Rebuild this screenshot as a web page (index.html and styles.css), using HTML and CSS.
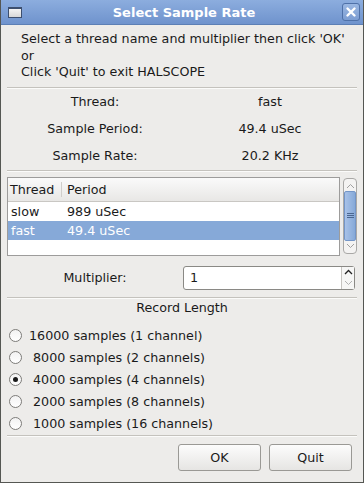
FILE: index.html
```html
<!DOCTYPE html>
<html lang="en">
<head>
    <meta charset="UTF-8">
    <title>Select Sample Rate</title>
    <link rel="stylesheet" href="styles.css">
</head>
<body>
    <div class="window">
        <div class="titlebar">
            <span class="win-icon"></span>
            <span class="title">Select Sample Rate</span>
            <span class="close-btn">
                <svg width="12" height="12" viewBox="0 0 12 12"><path d="M2.5 2.5 L9.5 9.5 M9.5 2.5 L2.5 9.5" stroke="#fff" stroke-width="2.4" stroke-linecap="round"/></svg>
            </span>
        </div>

        <div class="body">
            <div class="intro">
                <p>Select a thread name and multiplier then click 'OK'</p>
                <p>or</p>
                <p>Click 'Quit' to exit HALSCOPE</p>
            </div>
            <hr class="sep">

            <div class="info">
                <span>Thread:</span><span>fast</span>
                <span>Sample Period:</span><span>49.4 uSec</span>
                <span>Sample Rate:</span><span>20.2 KHz</span>
            </div>
            <hr class="sep">

            <div class="list-row">
                <div class="listbox">
                    <div class="lb-head">
                        <span class="col-thread">Thread</span>
                        <span class="col-period">Period</span>
                    </div>
                    <div class="lb-item">
                        <span class="col-thread">slow</span>
                        <span class="col-period">989 uSec</span>
                    </div>
                    <div class="lb-item selected">
                        <span class="col-thread">fast</span>
                        <span class="col-period">49.4 uSec</span>
                    </div>
                </div>
                <div class="vscroll">
                    <svg class="arrow" width="9" height="6" viewBox="0 0 9 6"><path d="M1 5 L4.5 1.5 L8 5" fill="none" stroke="#a0a0a0" stroke-width="1"/></svg>
                    <div class="thumb">
                        <svg width="7" height="7" viewBox="0 0 7 7"><path d="M0 1.5 H7 M0 3.5 H7 M0 5.5 H7" stroke="#4a6690" stroke-width="1"/></svg>
                    </div>
                    <svg class="arrow" width="9" height="6" viewBox="0 0 9 6"><path d="M1 1 L4.5 4.5 L8 1" fill="none" stroke="#a0a0a0" stroke-width="1"/></svg>
                </div>
            </div>

            <div class="mult-row">
                <span class="mult-label">Multiplier:</span>
                <div class="spinbox">
                    <span class="spin-value">1</span>
                    <div class="spin-btns">
                        <svg width="9" height="6" viewBox="0 0 9 6"><path d="M1 5 L4.5 1.5 L8 5" fill="none" stroke="#222" stroke-width="1.3"/></svg>
                        <svg width="9" height="6" viewBox="0 0 9 6"><path d="M1 1 L4.5 4.5 L8 1" fill="none" stroke="#b0b0b0" stroke-width="1"/></svg>
                    </div>
                </div>
            </div>
            <hr class="sep">

            <div class="record-title">Record Length</div>
            <div class="radios">
                <label class="radio"><span class="dot"></span>16000 samples (1 channel)</label>
                <label class="radio"><span class="dot"></span>&nbsp;8000 samples (2 channels)</label>
                <label class="radio"><span class="dot checked"></span>&nbsp;4000 samples (4 channels)</label>
                <label class="radio"><span class="dot"></span>&nbsp;2000 samples (8 channels)</label>
                <label class="radio"><span class="dot"></span>&nbsp;1000 samples (16 channels)</label>
            </div>
            <hr class="sep">

            <div class="buttons">
                <button class="btn">OK</button>
                <button class="btn">Quit</button>
            </div>
        </div>
    </div>
</body>
</html>
```

FILE: styles.css
```css
/* dialog look, GTK-ish */
body {
    margin: 0;
    font-family: "DejaVu Sans", sans-serif;
    font-size: 12.7px;
    color: #1a1a1a;
}

.window {
    width: 364px;
    height: 483px;
    box-sizing: border-box;
    background: #edecea;
    border: 1px solid #555753;
    border-top: none;
    display: flex;
    flex-direction: column;
    overflow: hidden;
}

.titlebar {
    height: 24px;
    flex: none;
    margin: 0 -1px;
    background: linear-gradient(#8cadde, #6f93cd);
    border-bottom: 1px solid #5c7fb5;
    display: flex;
    align-items: center;
    padding: 0 4px 0 8px;
}

.win-icon {
    width: 12px;
    height: 8px;
    border: 1px solid #3d4f6e;
    border-top-width: 2px;
    background: linear-gradient(#f4f4f4, #d8d8d8);
}

.title {
    flex: 1;
    text-align: center;
    color: #fff;
    font-weight: bold;
    font-size: 13px;
    padding-left: 4px;
}

.close-btn {
    width: 16px;
    height: 16px;
    border: 1px solid #4f71a8;
    border-radius: 3px;
    background: linear-gradient(#9ab7e2, #7c9dd2);
    display: flex;
    align-items: center;
    justify-content: center;
}

.body {
    flex: 1;
    display: flex;
    flex-direction: column;
    padding: 0 6px;
}

.intro {
    padding: 6px 0 6px 14px;
}

.intro p {
    margin: 0;
    line-height: 16.5px;
}

.sep {
    border: none;
    border-top: 1px solid #c4c2bd;
    border-bottom: 1px solid #fbfbfa;
    margin: 0;
}

.info {
    display: grid;
    grid-template-columns: 176px 1fr;
    row-gap: 11px;
    padding: 5px 0 6px;
    text-align: center;
    line-height: 16px;
}

.list-row {
    display: flex;
    gap: 3px;
    padding-top: 5px;
}

.listbox {
    width: 333px;
    height: 79px;
    border: 1px solid #9d9c9b;
    background: #fff;
    box-sizing: border-box;
}

.lb-head {
    height: 23px;
    display: flex;
    align-items: center;
    background: linear-gradient(#fafafa, #e8e7e5);
    border-bottom: 1px solid #c9c7c3;
}

.lb-head .col-thread {
    border-right: 1px solid #d0cecb;
    height: 15px;
    line-height: 15px;
    padding-left: 2px;
}

.col-thread {
    width: 54px;
    padding-left: 3px;
    flex: none;
    box-sizing: border-box;
}

.col-period {
    padding-left: 5px;
}

.lb-item {
    display: flex;
    height: 19px;
    line-height: 19px;
}

.lb-item.selected {
    background: #86a9d8;
    color: #fff;
}

.vscroll {
    width: 14px;
    height: 76px;
    margin-top: 1px;
    box-sizing: border-box;
    border: 1px solid #a9a8a6;
    border-radius: 4px;
    background: #f4f3f2;
    display: flex;
    flex-direction: column;
    align-items: center;
    justify-content: space-between;
    padding: 4px 0;
}

.thumb {
    width: 12px;
    height: 50px;
    background: linear-gradient(90deg, #a8c2e8, #86a9d8);
    border: 1px solid #7496c8;
    border-radius: 2px;
    box-sizing: border-box;
    display: flex;
    align-items: center;
    justify-content: center;
}

.mult-row {
    display: flex;
    align-items: center;
    padding: 10px 0 7px;
}

.mult-label {
    width: 176px;
    text-align: center;
}

.spinbox {
    width: 172px;
    height: 24px;
    box-sizing: border-box;
    border: 1px solid #8a8985;
    border-radius: 3px;
    background: #fff;
    display: flex;
}

.spin-value {
    flex: 1;
    padding-left: 6px;
    line-height: 22px;
}

.spin-btns {
    width: 12px;
    border-left: 1px solid #c6c4c0;
    background: #f6f6f5;
    display: flex;
    flex-direction: column;
    align-items: center;
    justify-content: space-around;
}

.record-title {
    text-align: center;
    padding-top: 1px;
    line-height: 16px;
}

.radios {
    display: flex;
    flex-direction: column;
    padding: 9px 0 0 2px;
}

.radio {
    display: flex;
    align-items: center;
    gap: 7px;
    height: 22px;
}

.dot {
    width: 11px;
    height: 11px;
    border: 1px solid #7d7c79;
    border-radius: 50%;
    background: linear-gradient(#f2f2f2, #ffffff);
    display: flex;
    align-items: center;
    justify-content: center;
}

.dot.checked::after {
    content: "";
    width: 5px;
    height: 5px;
    border-radius: 50%;
    background: #1a1a1a;
}

.buttons {
    display: flex;
    justify-content: flex-end;
    gap: 8px;
    padding: 7px 5px 0 0;
}

.btn {
    width: 83px;
    height: 27px;
    font-family: "DejaVu Sans", sans-serif;
    font-size: 12.7px;
    color: #1a1a1a;
    border: 1px solid #9a9995;
    border-radius: 3px;
    background: linear-gradient(#fcfcfc, #e6e5e3);
}
```
